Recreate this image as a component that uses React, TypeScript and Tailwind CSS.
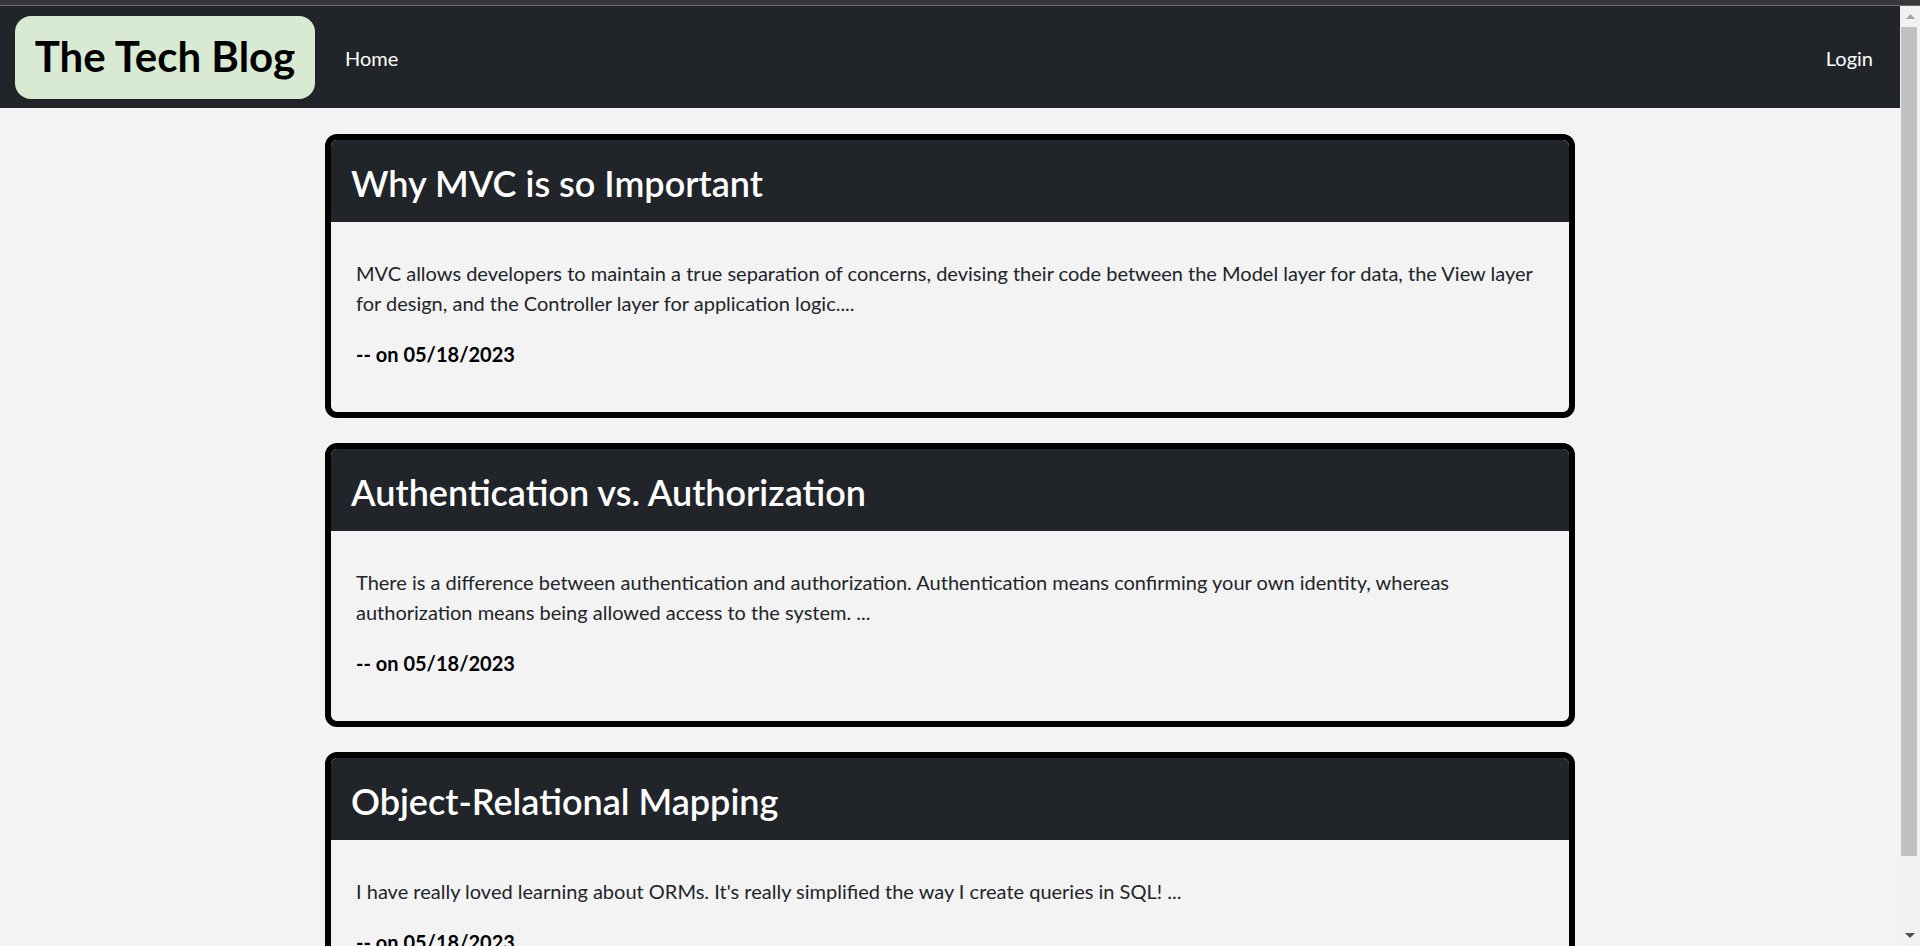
import React from 'react';

const posts = [
  {
    title: 'Why MVC is so Important',
    body: 'MVC allows developers to maintain a true separation of concerns, devising their code between the Model layer for data, the View layer for design, and the Controller layer for application logic....',
    date: '05/18/2023',
  },
  {
    title: 'Authentication vs. Authorization',
    body: 'There is a difference between authentication and authorization. Authentication means confirming your own identity, whereas authorization means being allowed access to the system. ...',
    date: '05/18/2023',
  },
  {
    title: 'Object-Relational Mapping',
    body: "I have really loved learning about ORMs. It's really simplified the way I create queries in SQL! ...",
    date: '05/18/2023',
  },
];

const PostCard = ({ title, body, date }: { title: string; body: string; date: string }) => (
  <div className="w-[1250px] shrink-0 border-[6px] border-black rounded-[12px] overflow-hidden bg-[#f3f3f3]">
    <div className="h-[82px] bg-[#212529] flex items-center pl-[20px] pt-[4px]">
      <h2 className="text-[36px] font-semibold text-white leading-none">{title}</h2>
    </div>
    <div className="pt-[36px] px-[25px] pb-[43px] text-[#212529]">
      <p className="text-[20px] leading-[30px]">{body}</p>
      <p className="mt-[21px] text-[20px] leading-[30px] font-bold text-black">-- on {date}</p>
    </div>
  </div>
);

const Scrollbar = () => (
  <div className="w-[20px] shrink-0 bg-[#f1f1f1] flex flex-col">
    <div className="h-[21px] flex items-center justify-center">
      <svg width="9" height="5" viewBox="0 0 9 5">
        <polygon points="4.5,0 9,5 0,5" fill="#a3a3a3" />
      </svg>
    </div>
    <div className="h-[829px] ml-[1px] mr-[3px] bg-[#c1c1c1]" />
    <div className="flex-1" />
    <div className="h-[21px] flex items-center justify-center">
      <svg width="10" height="5" viewBox="0 0 10 5">
        <polygon points="0,0 10,0 5,5" fill="#505050" />
      </svg>
    </div>
  </div>
);

export default function App() {
  return (
    <div className="h-screen flex flex-col overflow-hidden bg-[#f3f3f3]" style={{ fontFamily: 'Lato, "Open Sans", sans-serif' }}>
      <div className="h-[5px] bg-[#36373b] shrink-0" />
      <div className="h-px bg-[#6b6b6e] shrink-0" />
      <div className="flex flex-1 min-h-0">
        <div className="flex-1 min-w-0 flex flex-col">
          <nav className="h-[102px] shrink-0 bg-[#212529] flex items-center pl-[15px] pr-[27px]">
            <div className="w-[300px] h-[83px] bg-[#d9ead3] rounded-[16px] flex items-center justify-center pb-[3px]">
              <h1 className="text-[42px] font-bold text-black leading-none">The Tech Blog</h1>
            </div>
            <a className="ml-[30px] mt-[2px] text-[20px] text-white">Home</a>
            <a className="ml-auto mt-[2px] text-[20px] text-white">Login</a>
          </nav>
          <main className="flex flex-col items-center gap-[25px] pt-[26px]">
            {posts.map((p) => (
              <PostCard key={p.title} {...p} />
            ))}
          </main>
        </div>
        <Scrollbar />
      </div>
    </div>
  );
}
